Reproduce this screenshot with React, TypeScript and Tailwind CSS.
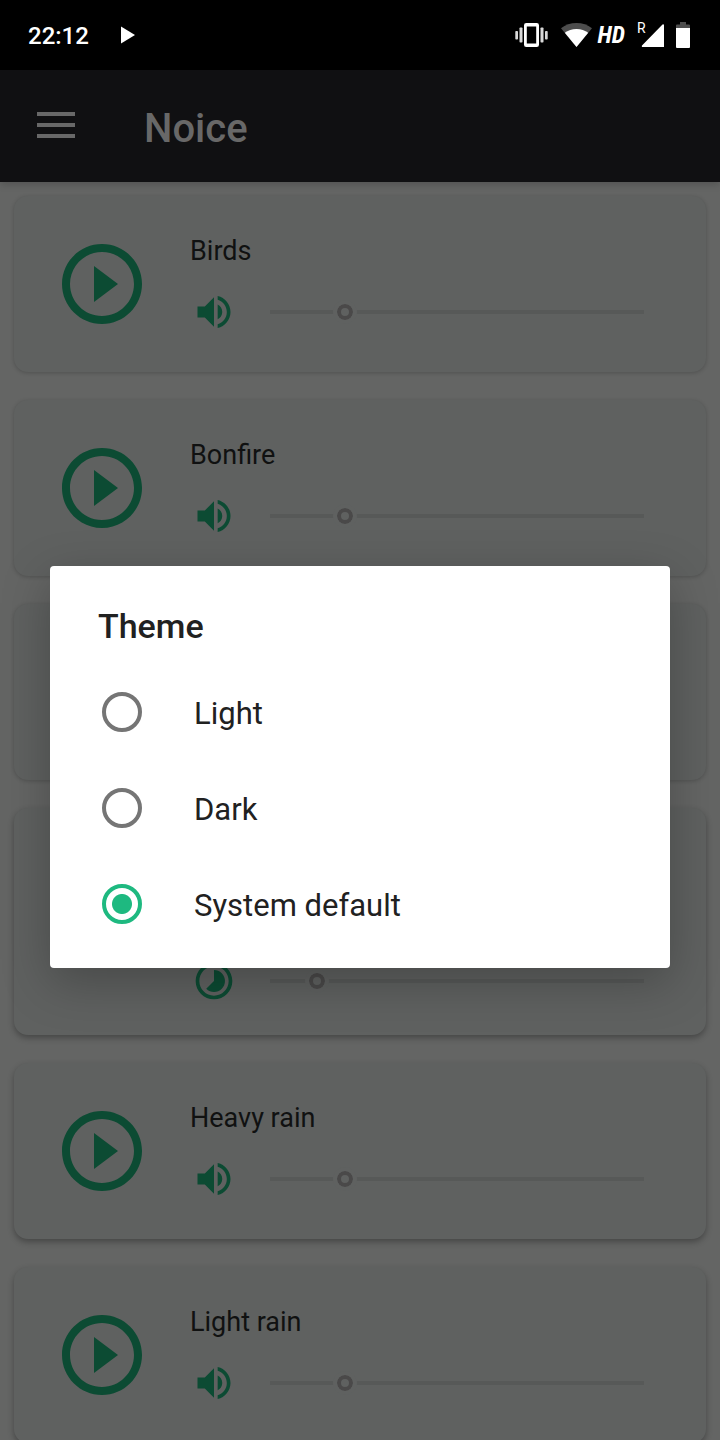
import { useState } from "react";

type Sound = { name: string; volume: number; interval?: number };

const sounds: Sound[] = [
  { name: "Birds", volume: 20 },
  { name: "Bonfire", volume: 20 },
  { name: "Coffee shop", volume: 20 },
  { name: "Distant thunder", volume: 20, interval: 12.5 },
  { name: "Heavy rain", volume: 20 },
  { name: "Light rain", volume: 20 },
];

const themes = ["Light", "Dark", "System default"];

function StatusBar() {
  return (
    <div className="flex h-[70px] shrink-0 items-center justify-between bg-black pr-[30px] pl-7 text-white">
      <div className="flex items-center gap-8">
        <span className="pt-0.5 text-2xl font-medium">22:12</span>
        <svg className="h-[18px] w-[14px]" viewBox="0 0 14 18" fill="currentColor" aria-hidden="true">
          <path d="M0 0.5 14 9 0 17.5z" />
        </svg>
      </div>
      <div className="flex items-center">
        <svg className="h-6 w-[33px]" viewBox="0 0 33 24" fill="currentColor" aria-hidden="true">
          <path
            fillRule="evenodd"
            d="M11.3 0h10.400a2.300 2.300 0 0 1 2.300 2.300v19.400a2.300 2.300 0 0 1-2.300 2.300H11.300A2.300 2.300 0 0 1 9 21.700V2.300A2.300 2.300 0 0 1 11.300 0zM11.800 3.500v17h9.400v-17z"
          />
          <g fillOpacity="0.85">
            <rect x="0.300" y="8" width="2.700" height="8.500" rx="0.800" />
            <rect x="4.500" y="4.500" width="3" height="15" rx="0.800" />
            <rect x="25.500" y="4.500" width="3" height="15" rx="0.800" />
            <rect x="30" y="8" width="2.700" height="8.500" rx="0.800" />
          </g>
        </svg>
        <svg className="ml-[13px] h-6 w-[31px]" viewBox="0 0 31 24" aria-hidden="true">
          <path d="M15.500 24 0 5.200C4.300 1.900 9.700 0 15.500 0S26.700 1.900 31 5.200z" fill="#4d4d4d" />
          <path d="M15.500 24 3.800 9.800C7 7.400 11 6 15.500 6s8.500 1.400 11.700 3.800z" fill="#fff" />
        </svg>
        <span className="ml-1.5 font-['Roboto_Condensed',Roboto,sans-serif] text-2xl font-bold italic">HD</span>
        <div className="relative ml-[15px]">
          <svg className="h-6 w-6" viewBox="0 0 24 24" fill="currentColor" aria-hidden="true">
            <path d="M22.500 1.500a1 1 0 0 1 1.500.800V24H2.600a.900.900 0 0 1-.600-1.500z" />
          </svg>
          <span className="absolute -top-1 -left-[3px] text-sm leading-[18px]">R</span>
        </div>
        <svg className="ml-3 h-[26px] w-[14px]" viewBox="0 0 14 26" aria-hidden="true">
          <path d="M4 0h6v2.500h3a1 1 0 0 1 1 1V6H0V3.500a1 1 0 0 1 1-1h3z" fill="#4d4d4d" />
          <path d="M0 6h14v19a1 1 0 0 1-1 1H1a1 1 0 0 1-1-1z" fill="#fff" />
        </svg>
      </div>
    </div>
  );
}

function Slider({ label, value }: { label: string; value: number }) {
  return (
    <input
      type="range"
      aria-label={label}
      defaultValue={value}
      min={0}
      max={100}
      step={0.5}
      className="h-6 min-w-0 flex-1 appearance-none bg-[linear-gradient(#575958,#575958)] bg-[length:calc(100%-24px)_4px] bg-center bg-no-repeat [&::-webkit-slider-thumb]:size-6 [&::-webkit-slider-thumb]:appearance-none [&::-webkit-slider-thumb]:rounded-full [&::-webkit-slider-thumb]:border-4 [&::-webkit-slider-thumb]:border-[#5f6160] [&::-webkit-slider-thumb]:bg-[#5f6160] [&::-webkit-slider-thumb]:shadow-[inset_0_0_0_4px_#4a4949]"
    />
  );
}

function SoundCard({ sound, raised }: { sound: Sound; raised: boolean }) {
  const hasInterval = sound.interval !== undefined;
  return (
    <li
      className={`flex shrink-0 items-center gap-10 rounded-[14px] bg-[#5f6160] pr-[50px] pl-10 ${
        raised ? "shadow-[0_3px_6px_rgba(0,0,0,0.3)]" : "shadow-[0_1px_4px_rgba(0,0,0,0.2)]"
      }`}
    >
      <button type="button" aria-label={`Play ${sound.name}`} className="shrink-0 text-[#0c4b33]">
        <svg className="size-24" viewBox="0 0 24 24" fill="currentColor" aria-hidden="true">
          <path d="M10 16.500l6-4.500-6-4.500v9zM12 2C6.480 2 2 6.480 2 12s4.480 10 10 10 10-4.480 10-10S17.520 2 12 2zm0 18c-4.410 0-8-3.590-8-8s3.590-8 8-8 8 3.590 8 8-3.590 8-8 8z" />
        </svg>
      </button>
      <div className={`flex min-w-0 flex-1 flex-col pt-[37px] ${hasInterval ? "pb-8" : "pb-[38px]"}`}>
        <h2 className="text-[27px] leading-9 text-[#101111]">{sound.name}</h2>
        <div className="mt-[21px] flex flex-col gap-[13px]">
          <div className="flex items-center gap-[22px] pl-0.5">
            <svg className="size-11 text-[#0c4b33]" viewBox="0 0 24 24" fill="currentColor" aria-hidden="true">
              <path d="M3 9v6h4l5 5V4L7 9H3zm13.500 3c0-1.770-1.020-3.290-2.500-4.030v8.050c1.480-.730 2.500-2.250 2.500-4.020zM14 3.230v2.060c2.890.860 5 3.540 5 6.710s-2.110 5.850-5 6.710v2.060c4.010-.910 7-4.490 7-8.770s-2.990-7.860-7-8.770z" />
            </svg>
            <Slider label={`${sound.name} volume`} value={sound.volume} />
          </div>
          {sound.interval !== undefined && (
            <div className="flex items-center gap-[22px] pl-0.5">
              <svg className="size-11 text-[#0c4b33]" viewBox="0 0 24 24" fill="currentColor" aria-hidden="true">
                <path d="M16.240 7.760C15.070 6.590 13.540 6 12 6v6l-4.240 4.240c2.340 2.340 6.140 2.340 8.490 0 2.340-2.340 2.340-6.140-.010-8.480zM12 2C6.480 2 2 6.480 2 12s4.480 10 10 10 10-4.480 10-10S17.520 2 12 2zm0 18c-4.420 0-8-3.580-8-8s3.580-8 8-8 8 3.580 8 8-3.580 8-8 8z" />
              </svg>
              <Slider label={`${sound.name} interval`} value={sound.interval} />
            </div>
          )}
        </div>
      </div>
    </li>
  );
}

function ThemeDialog() {
  const [theme, setTheme] = useState("System default");
  return (
    <div className="absolute inset-0 flex items-center justify-center px-[50px] pt-[94px]">
      <div
        role="dialog"
        aria-labelledby="theme-title"
        className="w-full rounded-[4px] bg-white pb-4 text-[#212121] shadow-[0_14px_48px_rgba(0,0,0,0.25)]"
      >
        <h2 id="theme-title" className="px-12 pt-10 pb-[18px] text-[34px] leading-10 font-medium">
          Theme
        </h2>
        {themes.map((name) => (
          <label key={name} className="flex h-24 items-center gap-[52px] pl-[52px] text-[31px]">
            <input
              type="radio"
              name="theme"
              checked={theme === name}
              onChange={() => setTheme(name)}
              className="size-10 appearance-none rounded-full border-4 border-[#757575] checked:border-[#1eb980] checked:bg-[radial-gradient(circle,#1eb980_9.5px,transparent_10.5px)]"
            />
            <span className="pt-1">{name}</span>
          </label>
        ))}
      </div>
    </div>
  );
}

export default function App() {
  return (
    <div className="relative flex h-screen flex-col overflow-hidden bg-[#646564] font-[Roboto,sans-serif]">
      <StatusBar />
      <header className="z-0 flex h-28 shrink-0 items-center gap-[69px] bg-[#101012] pl-[37px] text-[#686868] shadow-[0_2px_8px_rgba(0,0,0,0.2)]">
        <button type="button" aria-label="Menu" className="pb-0.5">
          <svg className="h-[26px] w-[38px]" viewBox="0 0 38 26" fill="currentColor" aria-hidden="true">
            <path d="M0 0h38v4H0zM0 11h38v4H0zM0 22h38v4H0z" />
          </svg>
        </button>
        <h1 className="pt-1.5 text-[40px] leading-[48px] font-medium">Noice</h1>
      </header>
      <main className="min-h-0 flex-1 overflow-hidden">
        <ul className="flex flex-col gap-7 px-[14px] pt-[14px]">
          {sounds.map((sound, i) => (
            <SoundCard key={sound.name} sound={sound} raised={i > 2} />
          ))}
        </ul>
      </main>
      <ThemeDialog />
    </div>
  );
}
